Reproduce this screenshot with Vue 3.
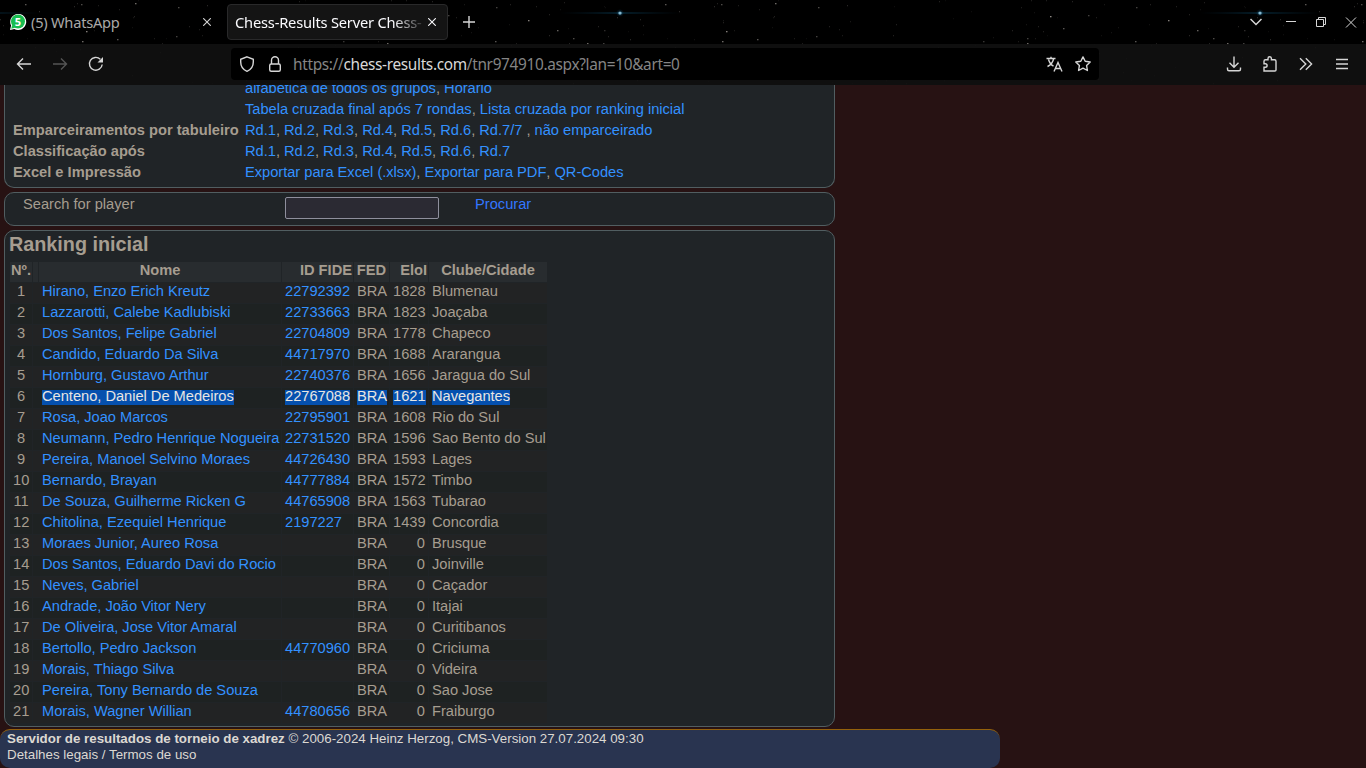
<script setup>
const boardRounds = ['Rd.1', 'Rd.2', 'Rd.3', 'Rd.4', 'Rd.5', 'Rd.6']
const columns = ['Nº.', '', 'Nome', 'ID FIDE', 'FED', 'EloI', 'Clube/Cidade']
const players = [
  ['Hirano, Enzo Erich Kreutz', '22792392', 1828, 'Blumenau'],
  ['Lazzarotti, Calebe Kadlubiski', '22733663', 1823, 'Joaçaba'],
  ['Dos Santos, Felipe Gabriel', '22704809', 1778, 'Chapeco'],
  ['Candido, Eduardo Da Silva', '44717970', 1688, 'Ararangua'],
  ['Hornburg, Gustavo Arthur', '22740376', 1656, 'Jaragua do Sul'],
  ['Centeno, Daniel De Medeiros', '22767088', 1621, 'Navegantes'],
  ['Rosa, Joao Marcos', '22795901', 1608, 'Rio do Sul'],
  ['Neumann, Pedro Henrique Nogueira', '22731520', 1596, 'Sao Bento do Sul'],
  ['Pereira, Manoel Selvino Moraes', '44726430', 1593, 'Lages'],
  ['Bernardo, Brayan', '44777884', 1572, 'Timbo'],
  ['De Souza, Guilherme Ricken G', '44765908', 1563, 'Tubarao'],
  ['Chitolina, Ezequiel Henrique', '2197227', 1439, 'Concordia'],
  ['Moraes Junior, Aureo Rosa', '', 0, 'Brusque'],
  ['Dos Santos, Eduardo Davi do Rocio', '', 0, 'Joinville'],
  ['Neves, Gabriel', '', 0, 'Caçador'],
  ['Andrade, João Vitor Nery', '', 0, 'Itajai'],
  ['De Oliveira, Jose Vitor Amaral', '', 0, 'Curitibanos'],
  ['Bertollo, Pedro Jackson', '44770960', 0, 'Criciuma'],
  ['Morais, Thiago Silva', '', 0, 'Videira'],
  ['Pereira, Tony Bernardo de Souza', '', 0, 'Sao Jose'],
  ['Morais, Wagner Willian', '44780656', 0, 'Fraiburgo']
]

const brightStars = [
  [528, 20, 0.6], [557, 30, 0.45], [573, 38, 0.35], [495, 41, 0.4], [587, 43, 0.5], [603, 43, 0.3],
  [25, 4, 0.4], [81, 4, 0.35], [86, 31, 0.6], [82, 41, 0.5], [117, 39, 0.4], [178, 7, 0.35],
  [135, 3, 0.5], [176, 36, 0.3], [410, 16, 0.65], [448, 15, 0.3], [423, 28, 0.4], [387, 38, 0.3],
  [387, 43, 0.5], [343, 41, 0.25], [496, 7, 0.3], [604, 30, 0.2]
]
let seed = 17
const rand = () => (seed = (seed * 16807) % 2147483647) / 2147483647
const faintStars = Array.from({ length: 115 }, () => [
  Math.floor(rand() * 640), Math.floor(rand() * 84), 0.05 + rand() * 0.14
])
const stars = [...brightStars, ...faintStars]
</script>

<template>
  <div class="window">
    <header class="chrome">
      <svg class="sky" width="1366" height="85" viewBox="0 0 1366 85">
        <defs>
          <linearGradient id="flare">
            <stop offset="0" stop-color="#0b4a70" stop-opacity="0" />
            <stop offset=".5" stop-color="#1278a8" stop-opacity=".5" />
            <stop offset="1" stop-color="#0b4a70" stop-opacity="0" />
          </linearGradient>
          <radialGradient id="glow">
            <stop offset="0" stop-color="#3aa0d0" stop-opacity=".5" />
            <stop offset="1" stop-color="#0b4a70" stop-opacity="0" />
          </radialGradient>
        </defs>
        <g v-for="tile in 3" :key="tile" :transform="`translate(${(tile - 1) * 640} 0)`">
          <rect v-for="(s, i) in stars" :key="i" :x="s[0]" :y="s[1]" :width="i < 22 ? 1.5 : 1" height="1.3" fill="#dcd4cc" :opacity="s[2]" />
          <rect x="-80" y="12.5" width="120" height="1" fill="url(#flare)" />
          <circle cx="-20" cy="13" r="4" fill="url(#glow)" />
          <rect x="-21.5" y="11.8" width="3" height="2.6" rx="1" fill="#86b8d0" />
        </g>
      </svg>

      <div class="tabs">
        <div class="tab">
          <svg class="favicon" width="18" height="18" viewBox="0 0 18 18">
            <path d="M1 17 2.1 12.6A8 8 0 1 1 5.3 15.9Z" fill="#fff" />
            <circle cx="9" cy="8.5" r="7" fill="#18bd50" /><path d="m2.2 15.7 1-4 3 3z" fill="#18bd50" />
            <text x="9" y="12.6" class="badge">5</text>
          </svg>
          <span class="tab-title">(5) WhatsApp</span>
          <svg class="tab-close" width="8" height="8" viewBox="0 0 8 8"><path d="m.2.2 7.6 7.6M7.8.2.2 7.8" /></svg>
        </div>
        <div class="tab active">
          <span class="tab-title">Chess-Results Server Chess-</span>
          <svg class="tab-close" width="8" height="8" viewBox="0 0 8 8"><path d="m.2.2 7.6 7.6M7.8.2.2 7.8" /></svg>
        </div>
        <svg class="new-tab" width="12" height="12" viewBox="0 0 12 12"><path d="M6 0v12M0 6h12" /></svg>
        <div class="controls">
          <svg width="12" height="12" viewBox="0 0 12 12"><path d="m.5 3 5.5 5.5L11.5 3" stroke-width="1.5" /></svg>
          <svg width="12" height="12" viewBox="0 0 12 12"><path d="M1 5.5h10" /></svg>
          <svg width="12" height="12" viewBox="0 0 12 12"><path d="M1.500 3.500h7v7h-7zM3.500 3.500V1.500h7v7H8.500" /></svg>
          <svg width="12" height="12" viewBox="0 0 12 12"><path d="m1 1.500 10 10M11 1.500l-10 10" /></svg>
        </div>
      </div>

      <div class="toolbar">
        <div class="nav">
          <svg width="16" height="16" viewBox="0 0 16 16"><path d="M15 8H1.500M7 2.500 1.500 8 7 13.500" /></svg>
          <svg class="dim" width="16" height="16" viewBox="0 0 16 16"><path d="M1 8h13.500M9 2.500 14.500 8 9 13.500" /></svg>
          <svg width="16" height="16" viewBox="0 0 16 16"><path d="M14.200 8.500A6.400 6.400 0 1 1 12.300 3.200" /><path d="M15 1v5.500H9.500z" fill="currentColor" stroke="none" /></svg>
        </div>
        <div class="address">
          <svg width="16" height="16" viewBox="0 0 16 16"><path d="M8 .8 14.300 3.300V6c0 4.500-2.500 7.700-6.300 9.300C4.200 13.700 1.700 10.500 1.700 6V3.300Z" /></svg>
          <svg width="16" height="16" viewBox="0 0 16 16"><rect x="2.700" y="8" width="10.600" height="7.200" rx="1.500" /><path d="M4.500 8V4.300a3.500 3.500 0 0 1 7 0V8" /></svg>
          <span class="url">https://<b>chess-results.com</b>/tnr974910.aspx?lan=10&amp;art=0</span>
          <svg class="translate" width="17" height="17" viewBox="0 0 17 17"><path d="M.5 2.500h9M5 .8v1.700M7.700 2.500C7 6 4.800 8.900 1.500 10.500M2.500 3.500C3.500 6.800 5.200 9 7.500 10M8 15.500 12 6.500l4 9M9.500 12.500h5" /></svg>
          <svg width="16" height="16" viewBox="0 0 16 16"><path d="m8 .9 2.200 4.400 5 .7-3.600 3.500.8 5L8 12.200l-4.400 2.300.8-5L.8 6l5-.7z" stroke-linejoin="round" /></svg>
        </div>
        <div class="actions">
          <svg width="16" height="16" viewBox="0 0 16 16"><path d="M8 .5v10.500M3.500 6.700 8 11.200l4.500-4.500M1.500 11.500v1.700c0 1 .5 1.500 1.500 1.500h10c1 0 1.500-.5 1.500-1.500v-1.700" /></svg>
          <svg width="16" height="16" viewBox="0 0 16 16"><path d="M2 5.200c0-1 .4-1.400 1.400-1.400H6V2.500a1.700 1.700 0 0 1 3.400 0v1.300h3.200c1 0 1.400.4 1.400 1.400v8.700c0 .8-.3 1.100-1.100 1.100H2v-3.700h1.300a1.800 1.800 0 0 0 0-3.600H2Z" /></svg>
          <svg width="16" height="16" viewBox="0 0 16 16"><path d="m2 2.200 5.800 5.800L2 13.800M7.800 2.200 13.600 8l-5.800 5.800" /></svg>
          <svg width="16" height="16" viewBox="0 0 16 16"><path d="M2 3.500h12M2 8h12M2 12.500h12" /></svg>
        </div>
      </div>
    </header>

    <main class="page">
      <section class="panel info">
        <div class="info-row"><span></span><div><a>alfabética de todos os grupos</a>, <a>Horário</a></div></div>
        <div class="info-row"><span></span><div><a>Tabela cruzada final após 7 rondas</a>, <a>Lista cruzada por ranking inicial</a></div></div>
        <div class="info-row">
          <strong>Emparceiramentos por tabuleiro</strong>
          <div><template v-for="r in boardRounds" :key="r"><a>{{ r }}</a>, </template><a>Rd.7/7</a> , <a>não emparceirado</a></div>
        </div>
        <div class="info-row">
          <strong>Classificação após</strong>
          <div><template v-for="r in boardRounds" :key="r"><a>{{ r }}</a>, </template><a>Rd.7</a></div>
        </div>
        <div class="info-row">
          <strong>Excel e Impressão</strong>
          <div><a>Exportar para Excel (.xlsx)</a>, <a>Exportar para PDF</a>, <a>QR-Codes</a></div>
        </div>
      </section>

      <section class="panel search">
        <span>Search for player</span>
        <input type="text" />
        <a class="submit">Procurar</a>
      </section>

      <section class="panel ranking">
        <h2>Ranking inicial</h2>
        <div class="grid">
          <div class="line head"><span v-for="(c, i) in columns" :key="i">{{ c }}</span></div>
          <div v-for="(p, i) in players" :key="i" class="line" :class="{ selected: i === 5 }">
            <span class="num">{{ i + 1 }}</span>
            <span></span>
            <span><a class="mark">{{ p[0] }}</a></span>
            <span><a class="mark">{{ p[1] }}</a></span>
            <span><i class="mark">BRA</i></span>
            <span class="elo"><i class="mark">{{ p[2] }}</i></span>
            <span><i class="mark">{{ p[3] }}</i></span>
          </div>
        </div>
      </section>

      <footer class="footer">
        <div><b>Servidor de resultados de torneio de xadrez</b> © 2006-2024 Heinz Herzog, CMS-Version 27.07.2024 09:30</div>
        <div>Detalhes legais / Termos de uso</div>
      </footer>
    </main>
  </div>
</template>

<style>
body { background: #271213; overflow: hidden; }
</style>

<style scoped>
.window {
  width: 1366px; height: 768px; overflow: hidden; display: flex; flex-direction: column;
  background: #271213; font-family: "Liberation Sans", Arial, sans-serif; font-size: 14.66px; color: #a69d90;
}
.window * { box-sizing: border-box; }
svg { flex: none; fill: none; stroke: currentColor; stroke-width: 1.4; }
.chrome { position: relative; height: 85px; flex: none; background: #000; color: #d6d6d6; font-family: "Noto Sans", sans-serif; }
.sky { position: absolute; left: 0; top: 0; stroke: none; }
.tabs { position: relative; height: 44px; display: flex; align-items: center; }
.tab { width: 220px; height: 36px; margin-left: 3px; padding: 0 12px 0 5px; display: flex; align-items: center; border-radius: 4px; }
.tab.active { width: 221px; margin-left: 4px; padding-left: 7px; padding-right: 11px; border: 1px solid #29292a; background: #141414; color: #fbfbfe; }
.favicon { margin: 0 4px 0 1px; stroke: none; }
.badge { fill: #fff; font-size: 11px; font-weight: 700; text-anchor: middle; }
.tab-title { flex: 1; min-width: 0; white-space: nowrap; font-size: 14.67px; letter-spacing: -.25px; color: #aaa9a8; }
.active .tab-title { color: #fbfbfe; letter-spacing: -.2px; mask-image: linear-gradient(to right, #000 158px, transparent 192px); }
.tab-close { stroke-width: 1.1; }
.new-tab { margin-left: 15px; }
.controls { margin-left: auto; margin-right: 9px; display: flex; gap: 18px; align-items: center; }
.controls svg { stroke-width: 1; }
.controls svg:first-child { margin-right: 5px; }
.toolbar { position: relative; height: 41px; background: rgba(18, 18, 18, .86); display: flex; align-items: center; }
.nav { width: 231px; padding-left: 16px; margin-bottom: 1px; display: flex; gap: 20px; }
.dim { color: #555; }
.address { width: 868px; height: 32px; margin-bottom: 1px; padding: 0 8px; display: flex; align-items: center; background: #000; border-radius: 4px; }
.address svg + svg { margin-left: 12px; }
.url { flex: 1; margin-left: 10px; font-size: 15.4px; letter-spacing: -.33px; line-height: 32px; padding-top: 1px; color: #858585; white-space: nowrap; }
.url b { font-weight: 400; color: #d8d8d8; }
.actions { margin-left: auto; margin-right: 16px; margin-bottom: 1px; display: flex; gap: 20px; }
.page { flex: 1; min-height: 0; overflow: hidden; }
a { color: #3391ff; text-decoration: none; }
.panel { width: 831px; margin-left: 4px; border: 1px solid #515e61; border-radius: 10px; background: #202427; }
.info { height: 103px; border-top: 0; border-radius: 0 0 10px 10px; padding-left: 8px; overflow: hidden; line-height: 21px; }
.info-row { display: grid; grid-template-columns: 232px 1fr; height: 21px; white-space: nowrap; }
.info-row:first-child { margin-top: -7px; }
.info a, .mark { letter-spacing: -.02px; }
.search { height: 34px; margin-top: 4px; display: grid; grid-template-columns: 262px 190px 1fr; padding-left: 18px; line-height: 22px; }
.search input { width: 154px; height: 22px; margin-top: 4px; border: 1px solid #8f8f9d; border-radius: 2px; background: #2b2a33; }
.submit { color: #3377ff; }
.ranking { height: 497px; margin-top: 4px; padding: 1px 4px; }
h2 { margin: 0; height: 30px; font-size: 19.8px; line-height: 24px; font-weight: 700; }
.grid { display: grid; row-gap: 1px; }
.line { display: grid; grid-template-columns: 22px 5px 242px 71px 35px 38px 118px; column-gap: 1px; height: 20px; line-height: 16px; white-space: nowrap; margin-left: 1px; }
.line span { background: #222324; padding: 0 3px; }
.line:nth-child(odd) span { background: #1e2222; }
.line.head span { background: #282c2f; font-weight: 700; text-align: center; padding: 0 1px; }
.head span:nth-child(4), .head span:nth-child(6) { text-align: right; }
.line .num { text-align: center; }
.line .elo { text-align: right; }
.mark { display: inline-block; height: 15px; line-height: 12px; font-style: normal; }
.selected .mark { background: #0550ae; color: #e8e6e3; }
.footer { width: 1000px; height: 39px; margin-top: 2px; padding: 1px 7px; background: #293450; border-top: 1px solid #94610b; border-radius: 10px; color: #dcd8d2; font-size: 13.33px; line-height: 16px; }
</style>
